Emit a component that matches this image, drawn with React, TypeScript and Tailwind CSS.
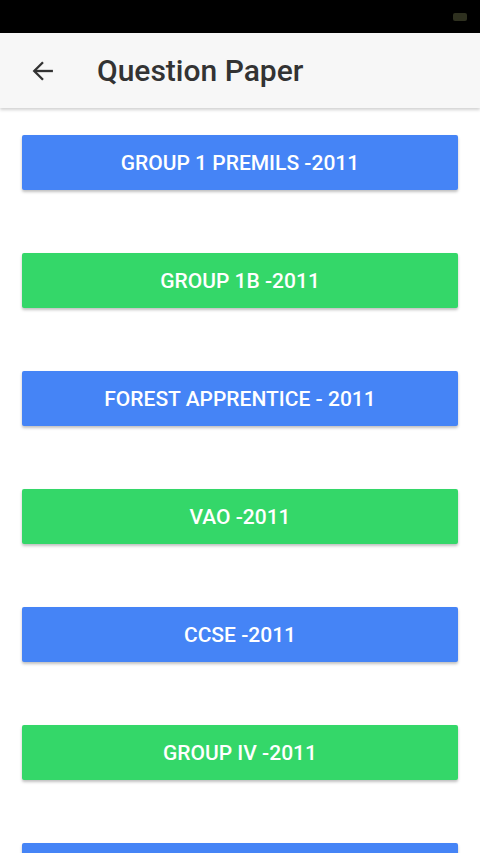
import React from 'react';

const papers = [
  { title: 'GROUP 1 PREMILS -2011', color: 'blue' },
  { title: 'GROUP 1B -2011', color: 'green' },
  { title: 'FOREST APPRENTICE - 2011', color: 'blue' },
  { title: 'VAO -2011', color: 'green' },
  { title: 'CCSE -2011', color: 'blue' },
  { title: 'GROUP IV -2011', color: 'green' },
  { title: 'GROUP II -2011', color: 'blue' },
];

const App = () => {
  return (
    <div className="w-[480px] h-[853px] overflow-hidden bg-white flex flex-col font-['Roboto',sans-serif]">
      {/* status bar */}
      <div className="h-[33px] bg-black flex items-center justify-end pr-[13px] shrink-0">
        <div className="w-[14px] h-[8px] rounded-[2px] bg-[#2e301f]" />
      </div>
      {/* app bar */}
      <div className="h-[75px] bg-[#f7f7f7] flex items-center shadow-[0_2px_3px_rgba(0,0,0,0.18)] shrink-0 z-10">
        <svg className="ml-[29px]" width="28" height="28" viewBox="0 0 24 24" fill="none" stroke="#333" strokeWidth="2">
          <path d="M20.5 12H4.5" />
          <path d="M12 4.5L4.5 12L12 19.5" />
        </svg>
        <h1 className="ml-[40px] text-[30px] text-[#333] font-medium">Question Paper</h1>
      </div>
      {/* list */}
      <div className="flex flex-col gap-[63px] px-[22px] pt-[27px]">
        {papers.map((p) => (
          <div
            key={p.title}
            className={`h-[55px] shrink-0 flex items-center justify-center rounded-[2px] shadow-[0_2px_3px_rgba(0,0,0,0.25)] ${p.color === 'blue' ? 'bg-[#4584f6]' : 'bg-[#34d769]'}`}
          >
            <span className="text-white text-[21px] font-medium leading-none pt-[2px]">{p.title}</span>
          </div>
        ))}
      </div>
    </div>
  );
};

export default App;
